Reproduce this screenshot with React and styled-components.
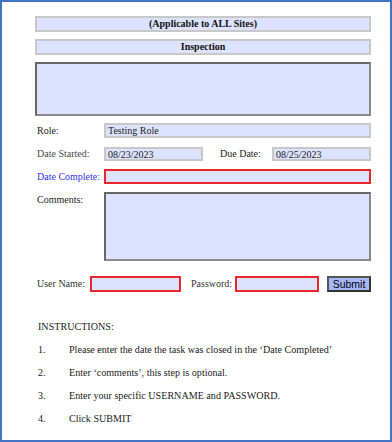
import styled, { createGlobalStyle } from 'styled-components'

const GlobalStyle = createGlobalStyle`
  html, body {
    margin: 0;
    padding: 0;
    background: #ffffff;
  }
`

const Frame = styled.div`
  box-sizing: border-box;
  width: 392px;
  height: 442px;
  border: 2px solid #4472c4;
  padding: 14px 19px 0 33px;
  font-family: "Liberation Serif", "Times New Roman", serif;
  font-size: 10px;
  color: #222;
  display: flex;
  flex-direction: column;
`

const TitleBar = styled.div`
  box-sizing: border-box;
  height: 16px;
  border: 2px solid #c8c8c8;
  background: #dce3fe;
  font-weight: bold;
  color: #111;
  text-align: center;
  line-height: 12px;
  margin-bottom: 7px;
`

const Area = styled.textarea`
  box-sizing: border-box;
  display: block;
  width: ${props => props.width || '100%'};
  height: ${props => props.height}px;
  border: 2px solid #666;
  border-right-color: #8a8a8a;
  border-bottom-color: #8a8a8a;
  background: #dce3fe;
  margin: 0;
  padding: 0;
  resize: none;
  outline: none;
`

const Row = styled.div`
  display: flex;
  align-items: ${props => (props.top ? 'flex-start' : 'center')};
  margin-top: ${props => props.gap}px;
`

const Label = styled.span`
  flex: none;
  width: ${props => (props.width ? `${props.width}px` : 'auto')};
  padding-left: ${props => (props.pad ?? 2)}px;
  margin-left: ${props => props.offset || 0}px;
  color: ${props => props.color || '#222'};
  white-space: nowrap;
  line-height: 12px;
  box-sizing: border-box;
`

const Field = styled.input`
  box-sizing: border-box;
  flex: ${props => (props.width ? 'none' : '1')};
  width: ${props => (props.width ? `${props.width}px` : 'auto')};
  min-width: 0;
  height: ${props => props.height || 15}px;
  margin: 0;
  padding: 0 2px;
  border: 2px solid ${props => (props.required ? '#e8262b' : '#c8c8c8')};
  background: #dce3fe;
  font-family: "Liberation Serif", "Times New Roman", serif;
  font-size: 10px;
  color: #222;
  outline: none;
`

const SubmitButton = styled.button`
  box-sizing: border-box;
  width: 46px;
  height: 16px;
  margin-left: 8px;
  padding: 0;
  border: 2px solid #555;
  border-right-color: #333;
  border-bottom-color: #333;
  background: #a8b7fa;
  font-family: "Liberation Sans", Arial, sans-serif;
  font-size: 10.5px;
  line-height: 12px;
  color: #000;
`

const Instructions = styled.div`
  margin-top: 29px;
  padding-left: 3px;
  color: #1a1a1a;
  font-size: 10.1px;
  line-height: 12px;
  display: flex;
  flex-direction: column;
  gap: 11px;
`

const Step = styled.div`
  display: grid;
  grid-template-columns: 31px 1fr;
`

const steps = [
  'Please enter the date the task was closed in the \u2018Date Completed\u2019',
  'Enter \u2018comments\u2019, this step is optional.',
  'Enter your specific USERNAME and PASSWORD.',
  'Click SUBMIT',
]

export default function App() {
  return (
    <>
      <GlobalStyle />
      <Frame>
        <TitleBar>(Applicable to ALL Sites)</TitleBar>
        <TitleBar>Inspection</TitleBar>
        <Area height={54} readOnly />

        <Row gap={7}>
          <Label width={69}>Role:</Label>
          <Field readOnly value="Testing Role" />
        </Row>

        <Row gap={9}>
          <Label width={69} color="#4a4a4a">Date Started:</Label>
          <Field readOnly width={99} height={14} value="08/23/2023" />
          <Label offset={17} width={52} pad={0} color="#1a1a1a">Due Date:</Label>
          <Field readOnly height={14} value="08/25/2023" />
        </Row>

        <Row gap={8}>
          <Label width={69} color="#3030f0">Date Complete:</Label>
          <Field required height={15} />
        </Row>

        <Row gap={8} top>
          <Label width={69} style={{ marginTop: 2 }}>Comments:</Label>
          <Area height={69} width="auto" style={{ flex: 1 }} readOnly />
        </Row>

        <Row gap={15}>
          <Label width={55} color="#333">User Name:</Label>
          <Field required width={91} height={16} />
          <Label offset={10} width={44} pad={0} color="#333">Password:</Label>
          <Field required width={84} height={16} />
          <SubmitButton>Submit</SubmitButton>
        </Row>

        <Instructions>
          <div>INSTRUCTIONS:</div>
          {steps.map((text, i) => (
            <Step key={i}>
              <span>{i + 1}.</span>
              <span>{text}</span>
            </Step>
          ))}
        </Instructions>
      </Frame>
    </>
  )
}
